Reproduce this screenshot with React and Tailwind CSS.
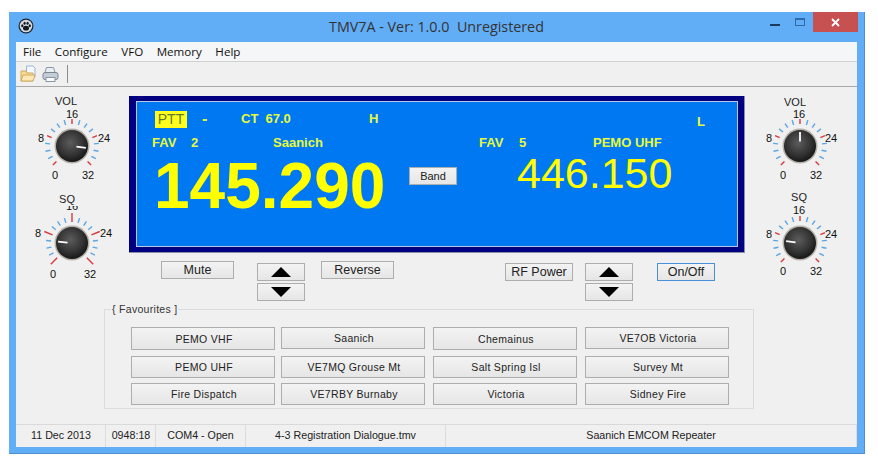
import React from "react";

const sans = "font-['Liberation_Sans',Arial,sans-serif]";
const ui = "font-['Open_Sans','Noto_Sans',sans-serif]";

function Knob({ h, cx, cy, r = 16, inner = 22, redOuter = 27, blueOuter = 27, angle, title, titleX, titleY, labels }) {
  const ticks = [];
  for (let i = 0; i <= 16; i++) {
    const a = ((225 - i * 16.875) * Math.PI) / 180;
    const red = i % 4 === 0;
    const o = red ? redOuter : blueOuter;
    ticks.push(
      <line
        key={i}
        x1={cx + inner * Math.cos(a)}
        y1={cy - inner * Math.sin(a)}
        x2={cx + o * Math.cos(a)}
        y2={cy - o * Math.sin(a)}
        stroke={red ? "#d8393c" : "#5aa5e6"}
        strokeWidth="1.4"
      />
    );
  }
  const pa = (angle * Math.PI) / 180;
  const id = `k${cx}${cy}${angle}`;
  return (
    <svg width="113" height={h} className="block shrink-0">
      <defs>
        <radialGradient id={id} cx="45%" cy="40%" r="65%">
          <stop offset="0%" stopColor="#5c5c5c" />
          <stop offset="60%" stopColor="#333333" />
          <stop offset="100%" stopColor="#111111" />
        </radialGradient>
      </defs>
      {ticks}
      <circle cx={cx} cy={cy} r={r + 1.5} fill="#b5b0a8" />
      <circle cx={cx} cy={cy} r={r} fill={`url(#${id})`} />
      <line
        x1={cx + 4.5 * Math.cos(pa)}
        y1={cy - 4.5 * Math.sin(pa)}
        x2={cx + 14 * Math.cos(pa)}
        y2={cy - 14 * Math.sin(pa)}
        stroke="#ffffff"
        strokeWidth="1.8"
      />
      {labels.map(([t, x, y]) => (
        <text key={t} x={x} y={y} textAnchor="middle" fontSize="11" fill="#111" fontFamily="Liberation Sans">
          {t}
        </text>
      ))}
      <rect x={titleX - 20} y={titleY - 11} width="40" height="14" fill="#f0f0f0" />
      <text x={titleX} y={titleY} textAnchor="middle" fontSize="11" fill="#222" fontFamily="Liberation Sans">
        {title}
      </text>
    </svg>
  );
}

function Btn({ className = "", border = "border-[#adadad]", children }) {
  return (
    <button
      className={`flex items-center justify-center border ${border} bg-linear-to-b from-[#f3f3f3] to-[#e6e6e6] text-[#222] ${sans} ${className}`}
    >
      {children}
    </button>
  );
}

function Arrows() {
  return (
    <div className="flex flex-col gap-[2px] mt-[2px]">
      <Btn className="w-[48px] h-[18px]">
        <svg width="20" height="10"><polygon points="10,0 20,10 0,10" fill="#000" /></svg>
      </Btn>
      <Btn className="w-[48px] h-[18px]">
        <svg width="20" height="10"><polygon points="0,0 20,0 10,10" fill="#000" /></svg>
      </Btn>
    </div>
  );
}

function Fav({ children, className = "" }) {
  return <Btn className={`w-[144px] pt-[2px] pl-[2px] text-[10.5px] tracking-[0.3px] ${className}`}>{children}</Btn>;
}

export default function App() {
  return (
    <div className="min-h-[476px] bg-white pt-3 pl-[9px]">
      <div className="w-[856px] h-[442px] bg-[#62aef6] flex flex-col border-b border-r border-[#4d8fd0]">
        {/* Title bar */}
        <div className="h-[30px] shrink-0 grid grid-cols-[1fr_auto_1fr] items-start">
          <div className="pl-[9px] pt-[6px]">
            <svg width="16" height="16" viewBox="0 0 16 16" className="block">
              <circle cx="8" cy="8" r="7.5" fill="#1c2330" />
              <circle cx="8" cy="8" r="6.3" fill="#d5d9e0" />
              <ellipse cx="8" cy="10.2" rx="3" ry="2.4" fill="#141820" />
              <ellipse cx="4.3" cy="7.8" rx="1.1" ry="1.5" fill="#141820" />
              <ellipse cx="6.6" cy="5.3" rx="1.1" ry="1.5" fill="#141820" />
              <ellipse cx="9.6" cy="5.3" rx="1.1" ry="1.5" fill="#141820" />
              <ellipse cx="11.8" cy="7.8" rx="1.1" ry="1.5" fill="#141820" />
            </svg>
          </div>
          <div className={`${ui} text-[14.3px] leading-[20px] pt-[5px] text-[#333] whitespace-pre`}>TMV7A - Ver: 1.0.0  Unregistered</div>
          <div className="flex justify-end items-start pr-[6px]">
            <div className="w-[10px] h-[2px] bg-[#1d3a5c] mt-[12px] mr-[15px] shrink-0" />
            <div className="w-[10px] h-[8px] border border-[#2f6aa8] border-t-2 mt-[6px] mr-[8px] shrink-0" />
            <div className="w-[45px] h-[20px] bg-[#c75050] flex items-center justify-center shrink-0">
              <svg width="9" height="9" viewBox="0 0 9 9"><path d="M1 1L8 8M8 1L1 8" stroke="#fff" strokeWidth="1.8" /></svg>
            </div>
          </div>
        </div>

        {/* Client area */}
        <div className="mx-[7px] w-[841px] h-[405px] bg-[#f0f0f0] flex flex-col">
          {/* Menu */}
          <div className={`h-[20px] bg-[#f5f6f7] border-b border-[#d0d0d0] flex items-center pl-[7px] gap-[13.5px] text-[11.6px] text-[#111] ${ui}`}>
            <span>File</span>
            <span>Configure</span>
            <span>VFO</span>
            <span>Memory</span>
            <span>Help</span>
          </div>
          {/* Toolbar */}
          <div className="h-[25px] border-b border-[#a8a8a8] flex items-center pl-[4px] gap-[6px]">
            <svg width="16" height="18" viewBox="0 0 16 18">
              <path d="M6.5 1h6.5l2 2v9H6.5z" fill="#f4f8ff" stroke="#9db4d4" />
              <path d="M1 6h5l1 2h6v8H1z" fill="#f9dc8e" stroke="#d0a860" />
              <path d="M1 16l2-6h12l-2 6z" fill="#fce8b4" stroke="#d0a860" />
            </svg>
            <svg width="17" height="17" viewBox="0 0 17 17">
              <path d="M4.5 1.5h7l1.5 5h-10z" fill="#e8eef6" stroke="#8a97a6" />
              <rect x="1" y="6.5" width="15" height="7" rx="2" fill="#c4ccd6" stroke="#7c8590" />
              <rect x="4" y="11.5" width="9" height="4" fill="#fbfbfb" stroke="#8a97a6" />
            </svg>
            <div className="w-px h-[18px] bg-[#8c8c8c] ml-[2px]" />
          </div>

          {/* Top section */}
          <div className="flex h-[221px] shrink-0">
            <div className="w-[113px] pt-[8px] shrink-0 flex flex-col">
              <Knob
                h={95}
                cx={56}
                cy={51}
                angle={-8}
                title="VOL"
                titleX={50}
                titleY={10}
                labels={[["16", 56, 23], ["8", 25, 47], ["24", 88, 47], ["0", 39, 84], ["32", 72, 84]]}
              />
              <Knob
                h={95}
                cx={56}
                cy={53}
                angle={174}
                inner={21}
                redOuter={30}
                blueOuter={26}
                title="SQ"
                titleX={51}
                titleY={13}
                labels={[["16", 56, 20], ["8", 22, 47], ["24", 90, 47], ["0", 37, 88], ["32", 74, 88]]}
              />
            </div>

            <div className="w-[616px] shrink-0 flex flex-col pt-[9px]">
              {/* Display */}
              <div className="h-[157px] bg-[#000080] pl-[7px] pr-[6px] pt-[5px] pb-[5px] border-r border-b border-[#8a8fa6]">
                <div className={`h-full bg-[#0078f2] border border-[#b8c8e0] text-[#e6fa3c] flex ${sans}`}>
                  <div className="w-[272px] shrink-0 flex flex-col pl-[15px]">
                    <div className="flex items-center mt-[8px] h-[18px] text-[13px] font-bold ml-[3px]">
                      <span className="w-[32px] h-[17px] bg-[#ffff20] text-[#5f7c28] font-normal text-[14px] leading-[17px] text-center">PTT</span>
                      <span className="ml-[15px] w-[39px] text-[16px] leading-[16px]">-</span>
                      <span className="whitespace-pre w-[128px]">CT  67.0</span>
                      <span>H</span>
                    </div>
                    <div className="flex h-[16px] mt-[7px] text-[13px] font-bold leading-[16px]">
                      <span className="w-[39px]">FAV</span>
                      <span className="w-[82px]">2</span>
                      <span>Saanich</span>
                    </div>
                    <div className="text-[64px] font-bold leading-[64px] text-[#ffff00] mt-[3px] ml-[2px]">145.290</div>
                  </div>
                  <div className="w-[70px] shrink-0 pt-[65px]">
                    <Btn className="w-[48px] h-[18px] text-[11px]">Band</Btn>
                  </div>
                  <div className="flex-1 flex flex-col">
                    <div className="h-[18px] mt-[10px] pl-[218px] text-[13px] font-bold">L</div>
                    <div className="flex h-[16px] mt-[5px] text-[13px] font-bold leading-[16px]">
                      <span className="w-[40px]">FAV</span>
                      <span className="w-[74px]">5</span>
                      <span>PEMO UHF</span>
                    </div>
                    <div className="text-[43px] leading-[44px] text-[#ffff00] pl-[38px]">446.150</div>
                  </div>
                </div>
              </div>

              {/* Controls */}
              <div className="flex items-start mt-[8px] text-[12.5px]">
                <Btn className="w-[73px] h-[18px] ml-[32px]">Mute</Btn>
                <div className="ml-[23px]"><Arrows /></div>
                <Btn className="w-[73px] h-[18px] ml-[16px]">Reverse</Btn>
                <Btn className="w-[68px] h-[18px] ml-[111px] mt-[2px]">RF Power</Btn>
                <div className="ml-[12px]"><Arrows /></div>
                <Btn className="w-[58px] h-[18px] ml-[24px] mt-[2px]" border="border-[#4a90d9]">On/Off</Btn>
              </div>
            </div>

            <div className="w-[112px] pt-[8px] shrink-0 flex flex-col">
              <Knob
                h={95}
                cx={55}
                cy={51}
                angle={90}
                title="VOL"
                titleX={50}
                titleY={11}
                labels={[["16", 54, 23], ["8", 24, 47], ["24", 86, 47], ["0", 38, 84], ["32", 71, 84]]}
              />
              <Knob
                h={95}
                cx={55}
                cy={53}
                angle={172}
                title="SQ"
                titleX={54}
                titleY={11}
                labels={[["16", 54, 24], ["8", 24, 48], ["24", 86, 48], ["0", 38, 85], ["32", 71, 85]]}
              />
            </div>
          </div>

          {/* Favourites */}
          <fieldset className={`ml-[88px] w-[650px] h-[105px] mt-[-4px] border border-[#dcdcdc] shrink-0 ${sans}`}>
            <legend className="ml-[6px] px-[1px] text-[10.5px] leading-[11px] tracking-[0.3px] text-[#333]">{"{ Favourites ]"}</legend>
            <div className="flex gap-[6px] mt-[12px] ml-[26px] w-[600px]">
              <div className="flex flex-col w-[144px]">
                <Fav className="h-[23px] mb-[6px]">PEMO VHF</Fav>
                <Fav className="h-[22px] mb-[5px]">PEMO UHF</Fav>
                <Fav className="h-[22px]">Fire Dispatch</Fav>
              </div>
              <div className="flex flex-col w-[144px]">
                <Fav className="h-[22px] mb-[7px]">Saanich</Fav>
                <Fav className="h-[22px] mb-[5px]">VE7MQ Grouse Mt</Fav>
                <Fav className="h-[22px]">VE7RBY Burnaby</Fav>
              </div>
              <div className="flex flex-col w-[144px] ml-[2px]">
                <Fav className="h-[23px] mb-[6px]">Chemainus</Fav>
                <Fav className="h-[22px] mb-[5px]">Salt Spring Isl</Fav>
                <Fav className="h-[22px]">Victoria</Fav>
              </div>
              <div className="flex flex-col w-[144px] ml-[2px]">
                <Fav className="h-[22px] mb-[7px]">VE7OB Victoria</Fav>
                <Fav className="h-[22px] mb-[5px]">Survey Mt</Fav>
                <Fav className="h-[22px]">Sidney Fire</Fav>
              </div>
            </div>
          </fieldset>

          {/* Status bar */}
          <div className={`mt-auto h-[23px] border-t border-[#d9d9d9] flex items-center text-[10.7px] text-[#222] ${sans}`}>
            <div className="w-[90px] h-full pl-[1px] text-center leading-[21px] border-r border-[#dcdcdc]">11 Dec 2013</div>
            <div className="w-[50px] h-full pl-[1px] text-center leading-[21px] border-r border-[#dcdcdc]">0948:18</div>
            <div className="w-[90px] h-full text-center leading-[21px] border-r border-[#dcdcdc]">COM4 - Open</div>
            <div className="w-[200px] h-full text-center leading-[21px] border-r border-[#dcdcdc]">4-3 Registration Dialogue.tmv</div>
            <div className="flex-1 h-full text-center leading-[21px] border-r border-[#dcdcdc]">Saanich EMCOM Repeater</div>
          </div>
        </div>
      </div>
    </div>
  );
}
